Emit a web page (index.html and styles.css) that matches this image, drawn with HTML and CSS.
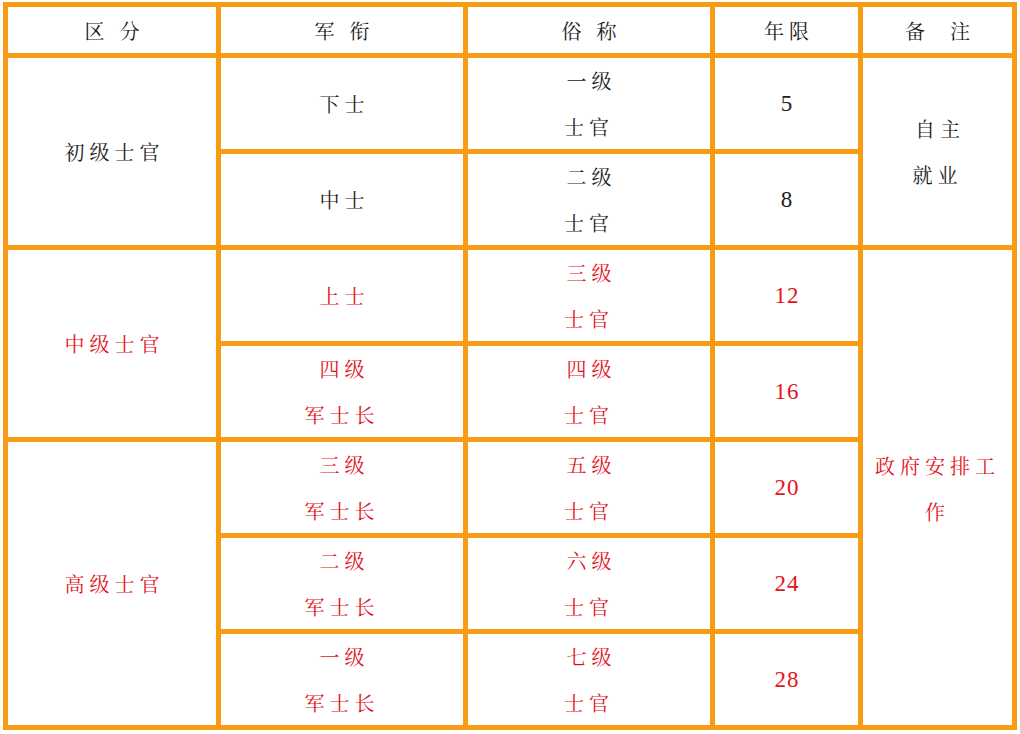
FILE: index.html
```html
<!DOCTYPE html>
<html lang="zh-CN">
<head>
<meta charset="utf-8">
<title>士官等级</title>
<link rel="stylesheet" href="styles.css">
</head>
<body>
<div class="table">
  <div class="cell head">区&nbsp;分</div>
  <div class="cell head">军&nbsp;衔</div>
  <div class="cell head">俗&nbsp;称</div>
  <div class="cell head">年限</div>
  <div class="cell head">备&nbsp;&nbsp;注</div>

  <div class="cell span2">初级士官</div>
  <div class="cell">下士</div>
  <div class="cell two">一级<br>士官</div>
  <div class="cell num">5</div>
  <div class="cell two span2">自主<br>就业</div>

  <div class="cell">中士</div>
  <div class="cell two">二级<br>士官</div>
  <div class="cell num">8</div>

  <div class="cell red span2">中级士官</div>
  <div class="cell red">上士</div>
  <div class="cell two red">三级<br>士官</div>
  <div class="cell num red">12</div>
  <div class="cell two red span5 wrap">政府安排工作</div>

  <div class="cell two red">四级<br>军士长</div>
  <div class="cell two red">四级<br>士官</div>
  <div class="cell num red">16</div>

  <div class="cell red span3">高级士官</div>
  <div class="cell two red">三级<br>军士长</div>
  <div class="cell two red">五级<br>士官</div>
  <div class="cell num red">20</div>

  <div class="cell two red">二级<br>军士长</div>
  <div class="cell two red">六级<br>士官</div>
  <div class="cell num red">24</div>

  <div class="cell two red">一级<br>军士长</div>
  <div class="cell two red">七级<br>士官</div>
  <div class="cell num red">28</div>
</div>
</body>
</html>
```
FILE: styles.css
```css
html, body {
  margin: 0;
  padding: 0;
  background: #ffffff;
}

body {
  font-family: "Noto Serif CJK SC", "Liberation Serif", "Noto Sans CJK SC", serif;
  color: #1c1c1c;
}

.table {
  display: grid;
  grid-template-columns: 208px 242px 242px 143px 149px;
  grid-template-rows: 46px repeat(7, 91px);
  gap: 5px;
  padding: 5px;
  background: #f79c14;
  width: max-content;
  margin: 2px 0 0 3px;
}

.cell {
  background: #ffffff;
  display: flex;
  align-items: center;
  justify-content: center;
  text-align: center;
  font-size: 20px;
  letter-spacing: 5px;
  text-indent: 5px;
  line-height: 45px;
}

.head {
  padding-top: 1px;
}

.two {
  line-height: 46px;
}

.num {
  font-family: "Liberation Serif", serif;
  font-size: 23px;
  letter-spacing: 1px;
  text-indent: 1px;
}

.red {
  color: #e3131b;
}

.span2 {
  grid-row: span 2;
}

.span3 {
  grid-row: span 3;
}

.span5 {
  grid-row: span 5;
}

.wrap {
  padding: 3px 6px 0;
  text-indent: 0;
}
```
